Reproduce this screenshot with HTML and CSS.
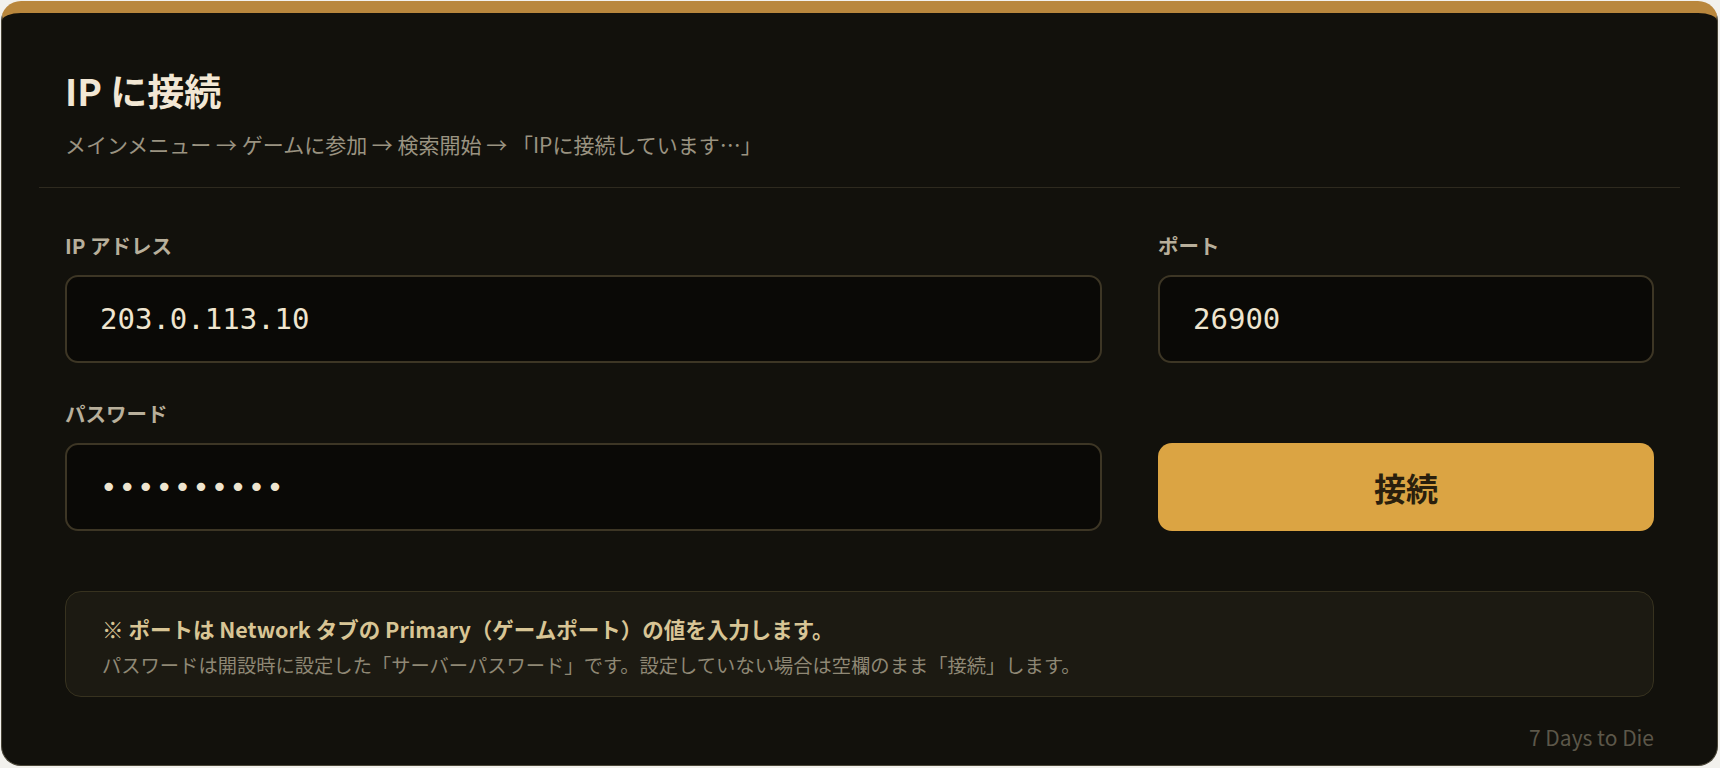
FILE: index.html
```html
<!DOCTYPE html>
<html lang="ja">
<head>
    <meta charset="UTF-8">
    <meta name="viewport" content="width=device-width, initial-scale=1.0">
    <title>IP に接続</title>
    <link rel="stylesheet" href="styles.css">
</head>
<body>

    <div class="card">
        <div class="card-header">
            <h1>IP に接続</h1>
            <div class="breadcrumb">メインメニュー → ゲームに参加 → 検索開始 → 「IPに接続しています…」</div>
        </div>

        <div class="card-body">
            <form class="connect-form" onsubmit="return false;">
                <div class="field">
                    <label for="ipInput">IP アドレス</label>
                    <input class="text-input" id="ipInput" type="text" value="203.0.113.10">
                </div>
                <div class="field">
                    <label for="portInput">ポート</label>
                    <input class="text-input" id="portInput" type="text" value="26900">
                </div>
                <div class="field">
                    <label for="passInput">パスワード</label>
                    <input class="text-input password" id="passInput" type="password" value="secret1234">
                </div>
                <div class="field field-button">
                    <button class="connect-button" type="submit">接続</button>
                </div>
            </form>

            <div class="note">
                <div class="note-title">※ ポートは Network タブの Primary（ゲームポート）の値を入力します。</div>
                <div class="note-text">パスワードは開設時に設定した「サーバーパスワード」です。設定していない場合は空欄のまま「接続」します。</div>
            </div>

            <div class="footer">7 Days to Die</div>
        </div>
    </div>

</body>
</html>
```

FILE: styles.css
```css
html, body {
    margin: 0;
    padding: 0;
}
body {
    font-family: "Noto Sans CJK JP", "Noto Sans", sans-serif;
    background-color: #f2f1ed;
    padding: 1px 2px 2px 1px;
    box-sizing: border-box;
    height: 100vh;
}
.card {
    box-sizing: border-box;
    height: 100%;
    background-color: #12110c;
    border: 1px solid #4a4638;
    border-top: 12px solid #b9873d;
    border-radius: 20px;
    padding: 0 37px;
    display: flex;
    flex-direction: column;
}
.card-header {
    padding: 55px 26px 29px;
    border-bottom: 1px solid #2e2a1f;
}
.card-header h1 {
    margin: 0;
    font-size: 37px;
    line-height: 44px;
    font-weight: 700;
    color: #f2e7d4;
}
.breadcrumb {
    margin-top: 18px;
    font-size: 21px;
    line-height: 28px;
    color: #9a9381;
}
.card-body {
    flex: 1;
    padding: 43px 26px 0;
    display: flex;
    flex-direction: column;
}
.connect-form {
    display: grid;
    grid-template-columns: 1fr 496px;
    column-gap: 56px;
    row-gap: 36px;
}
.field {
    display: flex;
    flex-direction: column;
}
.field label {
    font-size: 20.5px;
    line-height: 28px;
    font-weight: 700;
    color: #b8af9b;
    margin-bottom: 16px;
}
.field-button {
    justify-content: flex-end;
}
.text-input {
    box-sizing: border-box;
    height: 88px;
    padding: 0 33px;
    background-color: #0a0906;
    border: 2px solid #3d3625;
    border-radius: 13px;
    color: #efe5cf;
    font-family: "DejaVu Sans Mono", "Liberation Mono", monospace;
    font-size: 29px;
    outline: none;
}
.text-input.password {
    letter-spacing: 1px;
}
.connect-button {
    height: 88px;
    background-color: #dba443;
    border: none;
    border-radius: 14px;
    color: #2a1f0d;
    font-family: "Noto Sans CJK JP", sans-serif;
    font-size: 32px;
    font-weight: 700;
    cursor: pointer;
}
.connect-button:hover {
    background-color: #e3ae50;
}
.note {
    margin-top: 60px;
    padding: 22px 36px 16px;
    background-color: #1c1a12;
    border: 1px solid #37321f;
    border-radius: 16px;
}
.note-title {
    font-size: 21.5px;
    line-height: 30px;
    font-weight: 700;
    color: #d8c595;
    margin-bottom: 6px;
}
.note-text {
    font-size: 19.3px;
    line-height: 30px;
    color: #8f8875;
}
.footer {
    margin-top: 26px;
    text-align: right;
    font-size: 21px;
    line-height: 28px;
    color: #5c5749;
}
```
